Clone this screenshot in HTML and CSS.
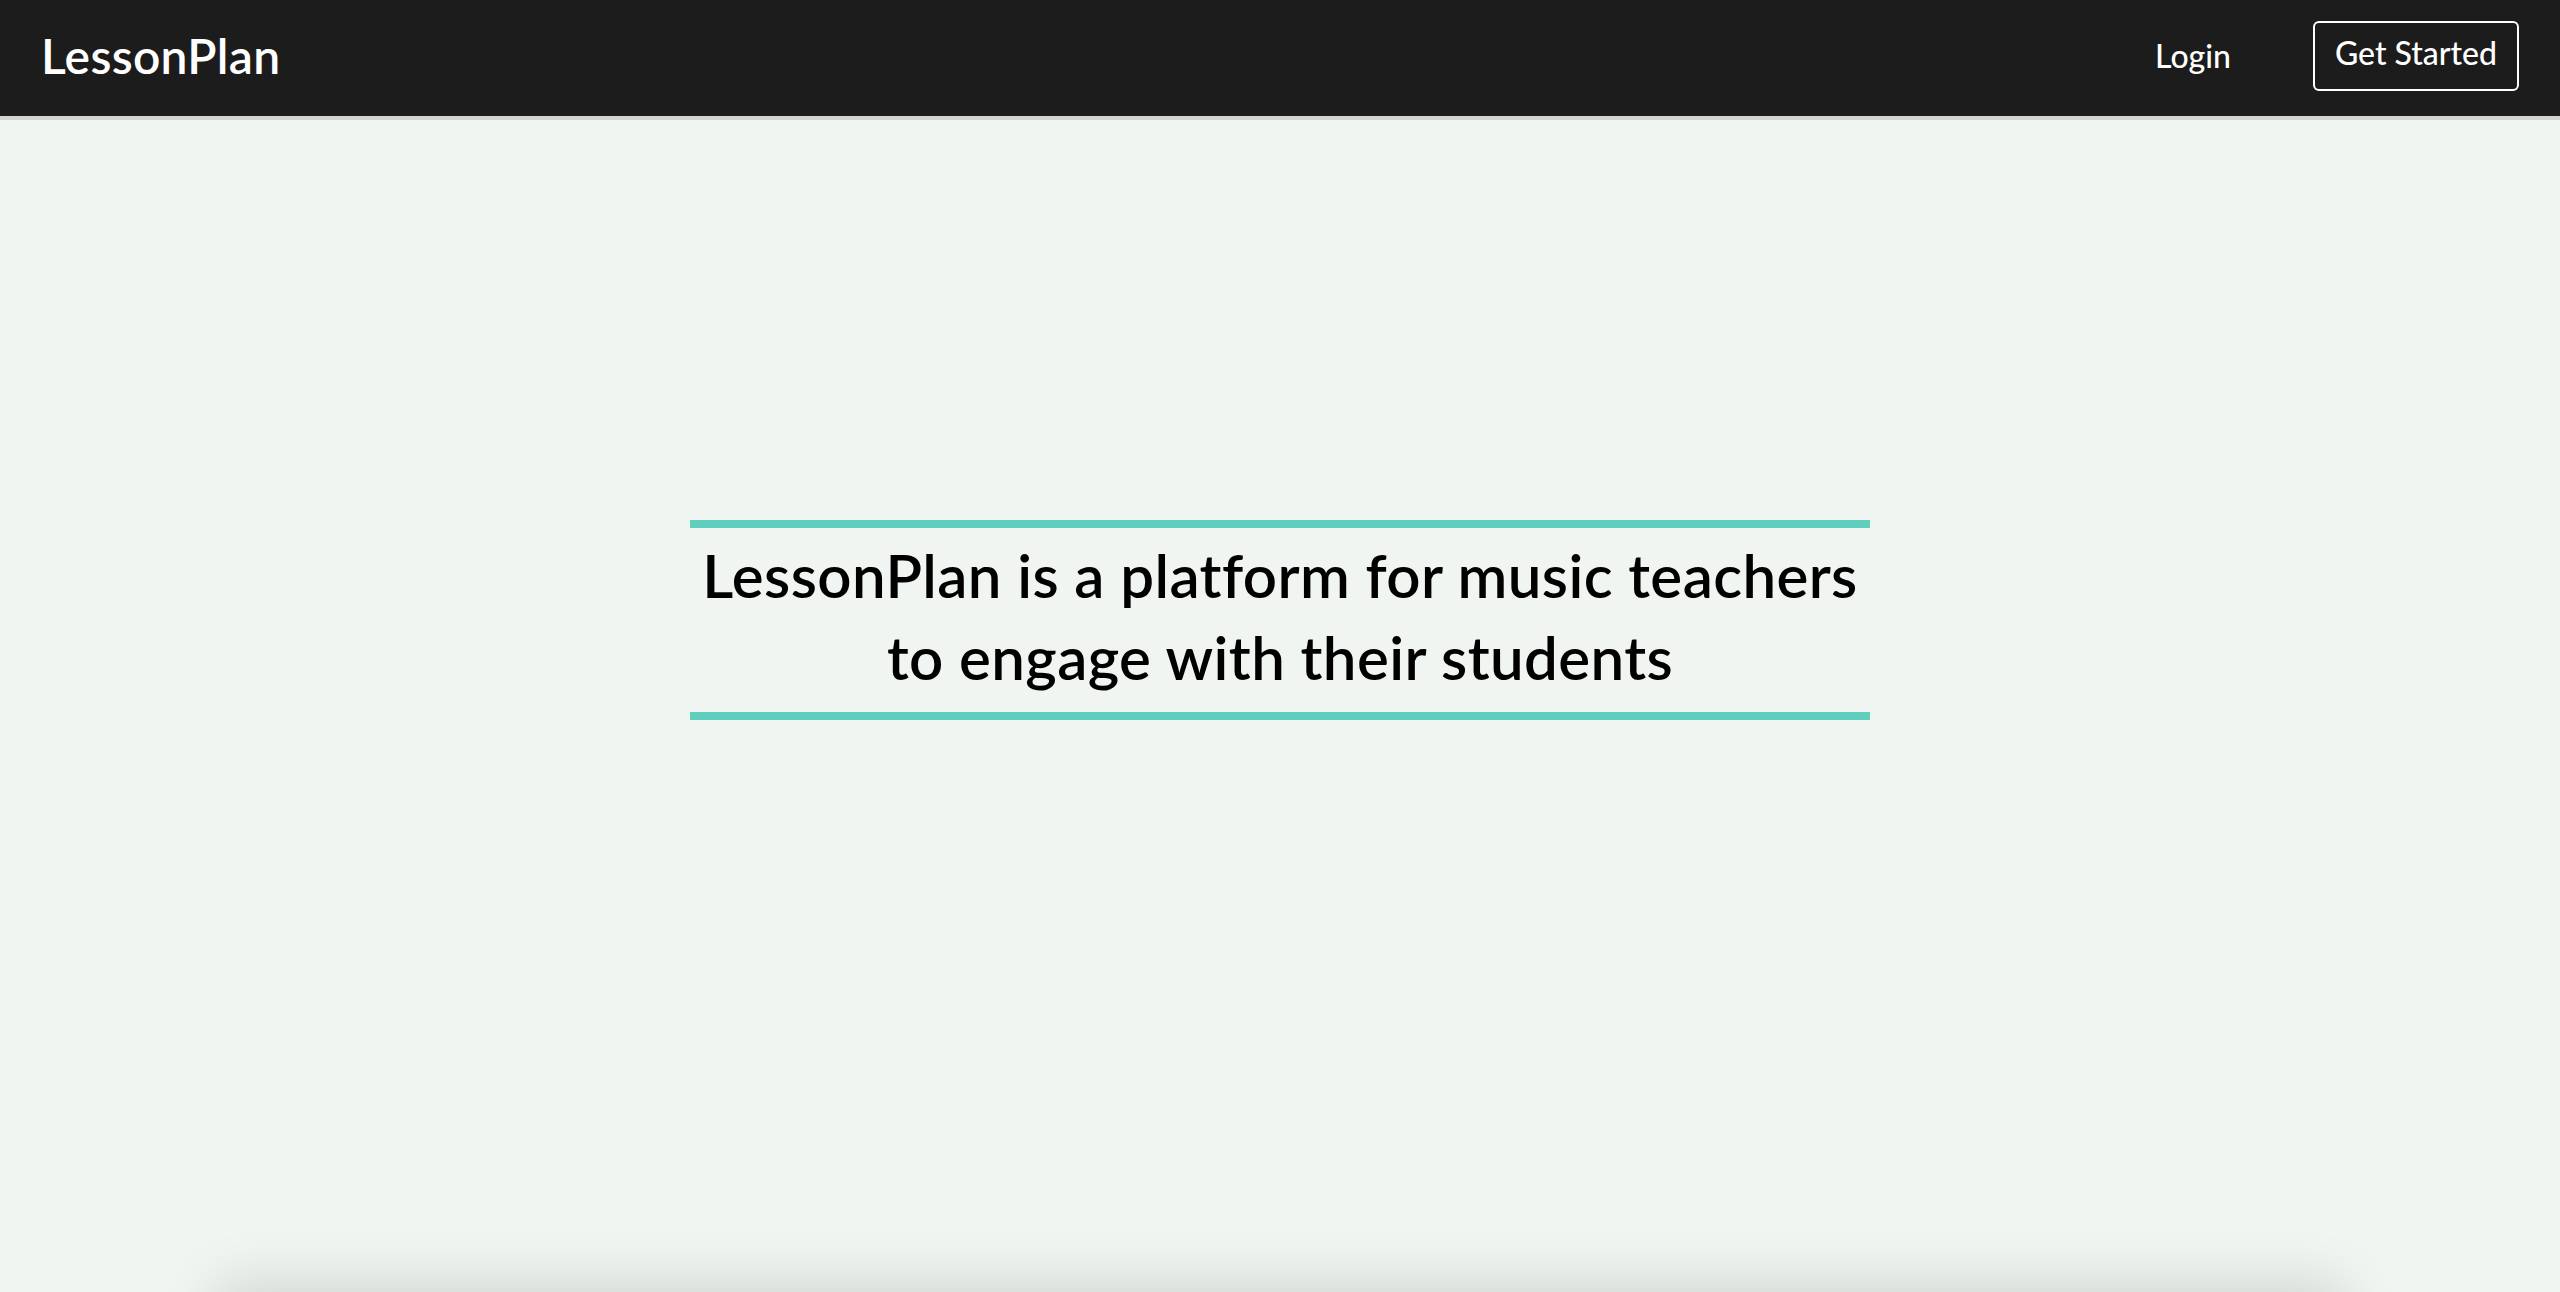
FILE: index.html
```
<!DOCTYPE html>
<html lang="en">
<head>
<meta charset="utf-8">
<title>LessonPlan</title>
<link rel="stylesheet" href="styles.css">
</head>
<body>
<header class="topbar">
  <div class="brand">LessonPlan</div>
  <nav class="nav">
    <a class="nav-link" href="#">Login</a>
    <a class="nav-button" href="#">Get Started</a>
  </nav>
</header>
<main class="hero">
  <h1 class="tagline">LessonPlan is a platform for music teachers<br>to engage with their students</h1>
</main>
<section class="features"></section>
</body>
</html>
```
FILE: styles.css
```
html, body {
  margin: 0;
  padding: 0;
}
body {
  background: #f0f5f1;
  font-family: Lato, "Noto Sans", sans-serif;
  color: #000;
  overflow: hidden;
}
.topbar {
  height: 116px;
  background: #1c1c1c;
  border-bottom: 4px solid #d3d5d3;
  display: flex;
  align-items: center;
  justify-content: space-between;
  padding: 0 41px 0 41px;
}
.brand {
  color: #fff;
  font-size: 48px;
  font-weight: 600;
  letter-spacing: 0.3px;
  margin-bottom: 5px;
}
.nav {
  display: flex;
  align-items: center;
  gap: 82px;
}
.nav-link {
  color: #fff;
  text-decoration: none;
  font-size: 32px;
  font-weight: 500;
  margin-bottom: 6px;
}
.nav-button {
  color: #fff;
  text-decoration: none;
  font-size: 32px;
  font-weight: 500;
  line-height: 40px;
  padding: 10px 20px 16px;
  border: 2px solid #fff;
  border-radius: 6px;
  margin-bottom: 4px;
}
.hero {
  display: flex;
  justify-content: center;
  padding-top: 400px;
}
.tagline {
  margin: 0;
  width: 1180px;
  border-top: 8px solid #5fcfbd;
  border-bottom: 8px solid #5fcfbd;
  padding: 6px 0 14px;
  text-align: center;
  font-size: 60px;
  font-weight: 600;
  line-height: 82px;
  letter-spacing: 0.4px;
}
.features {
  width: 2130px;
  height: 400px;
  margin: 572px auto 0;
  background: #f0f5f1;
  border-radius: 12px;
  box-shadow: 0 -6px 60px rgba(0, 0, 0, 0.14);
}
```
